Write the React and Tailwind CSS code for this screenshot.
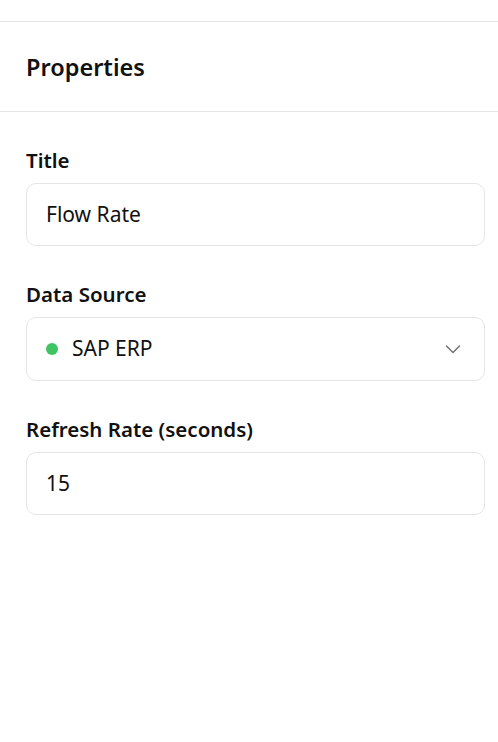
import React from "react";

function Field({ label, children }) {
  return (
    <div className="flex flex-col gap-[9px]">
      <label className="text-[20.5px] leading-[27px] font-semibold text-[#111]">{label}</label>
      {children}
    </div>
  );
}

export default function App() {
  return (
    <div
      className="min-h-screen bg-white text-[#111]"
      style={{ fontFamily: "'Noto Sans', 'Open Sans', sans-serif" }}
    >
      <div className="h-[21px]" />
      {/* Header */}
      <div className="border-t border-b border-[#e5e5e5] h-[91px] flex items-center px-[26px]">
        <h2 className="text-[23.5px] font-semibold leading-[30px]">Properties</h2>
      </div>

      {/* Form */}
      <div className="pt-[35px] pl-[26px] pr-[13px] flex flex-col gap-[35px]">
        <Field label="Title">
          <div className="h-[63px] border border-[#e5e5e5] rounded-[10px] flex items-center px-[19px] text-[21px]">
            Flow Rate
          </div>
        </Field>

        <Field label="Data Source">
          <div className="h-[64px] border border-[#e5e5e5] rounded-[10px] flex items-center pl-[19px] pr-[23px] text-[21px]">
            <span className="w-[12px] h-[12px] rounded-full bg-[#3fc463] mr-[14px]" />
            <span className="flex-1">SAP ERP</span>
            <svg width="16" height="16" viewBox="0 0 16 16" fill="none" stroke="#777" strokeWidth="1.6" strokeLinecap="round" strokeLinejoin="round">
              <path d="M1.5 5l6.5 6.5 6.5-6.5" />
            </svg>
          </div>
        </Field>

        <Field label="Refresh Rate (seconds)">
          <div className="h-[63px] border border-[#e5e5e5] rounded-[10px] flex items-center px-[19px] text-[21px]">
            15
          </div>
        </Field>
      </div>
    </div>
  );
}
